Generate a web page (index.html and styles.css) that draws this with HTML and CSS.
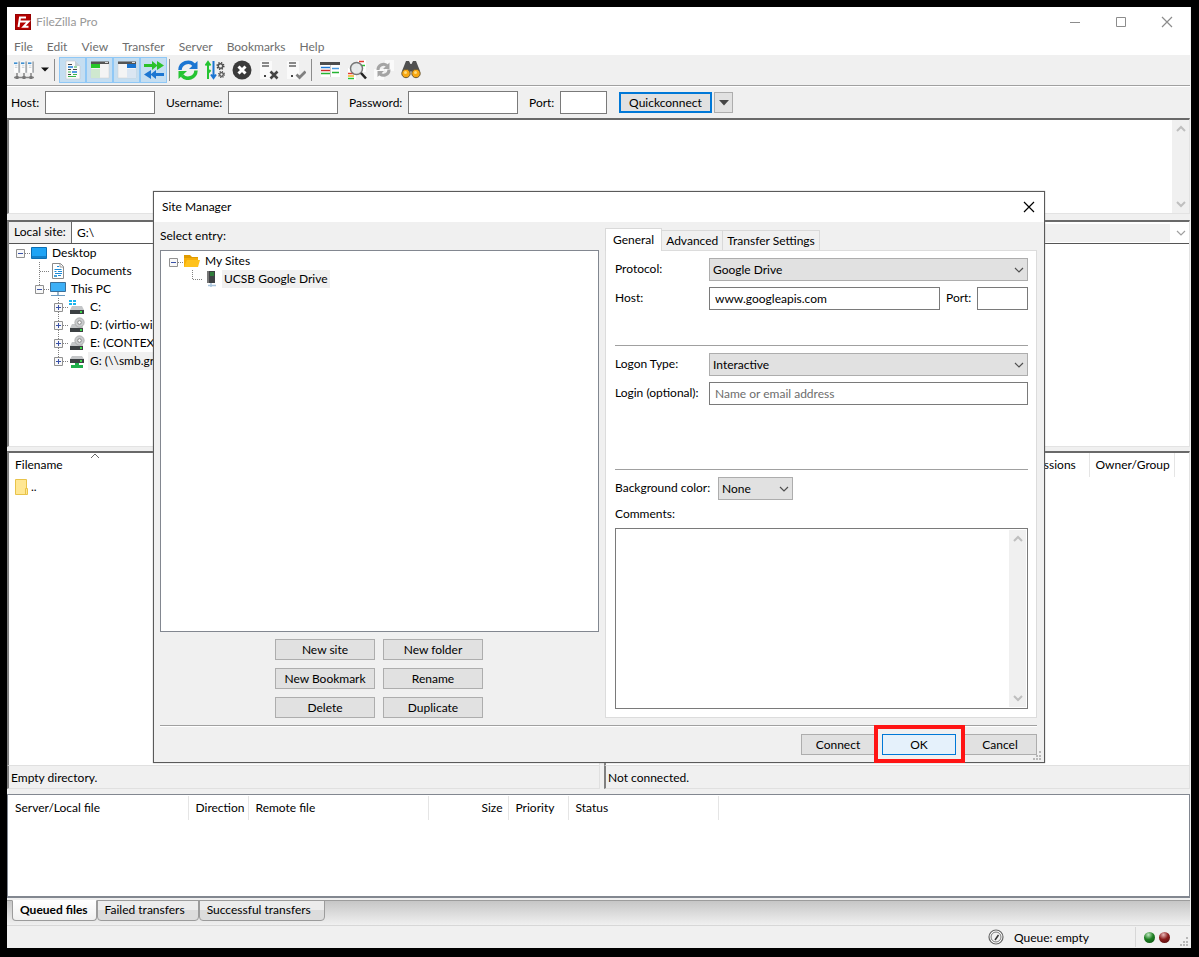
FILE: index.html
```html
<!DOCTYPE html>
<html lang="en">
<head>
<meta charset="utf-8">
<title>FileZilla Pro</title>
<link rel="stylesheet" href="styles.css">
</head>
<body>
<svg class="defs" aria-hidden="true">
  <symbol id="chev-up" viewBox="0 0 10 8"><path d="M1 6 5 2l4 4" fill="none" stroke="currentColor" stroke-width="2"/></symbol>
  <symbol id="chev-down" viewBox="0 0 10 8"><path d="M1 2l4 4 4-4" fill="none" stroke="currentColor" stroke-width="2"/></symbol>
  <symbol id="combo-arrow" viewBox="0 0 10 8"><path d="M1 2l4 4 4-4" fill="none" stroke="currentColor" stroke-width="1.2"/></symbol>
  <symbol id="close" viewBox="0 0 12 12"><path d="M1 1l10 10M11 1 1 11" stroke="currentColor" stroke-width="1.2"/></symbol>
  <symbol id="grip" viewBox="0 0 10 10"><path d="M7 0h2v2h-2zM7 4h2v2h-2zM7 7h2v2h-2zM4 4h2v2h-2zM4 7h2v2h-2zM1 7h2v2h-2z" fill="#b8b8b8"/></symbol>
  <symbol id="drive" viewBox="0 0 16 16"><path d="M3 7h10l2 4H1z" fill="#c4c6c8"/><path d="M1 11h14v4H1z" fill="#3c4043"/><path d="M11 12h2v2h-2z" fill="#3ddc4a"/></symbol>
  <symbol id="disc-drive" viewBox="0 0 16 16"><path d="M3 7h10l1 4H1z" fill="#c4c6c8"/><path d="M1 11h13v4H1z" fill="#3c4043"/><circle cx="10.500" cy="5.500" r="4.700" fill="#c9cbcd" stroke="#999" stroke-width=".6"/><circle cx="10.500" cy="5.500" r="1.800" fill="#fff" stroke="#888"/><path d="M11 12h2v2h-2z" fill="#3ddc4a"/></symbol>
  <symbol id="box-plus" viewBox="0 0 9 9"><path d="M.5.5h8v8h-8z" fill="#f8f8f8" stroke="#919191"/><path d="M2 4.500h5M4.500 2v5" stroke="#3a52a8"/></symbol>
  <symbol id="box-minus" viewBox="0 0 9 9"><path d="M.5.5h8v8h-8z" fill="#f8f8f8" stroke="#919191"/><path d="M2 4.500h5" stroke="#3a52a8"/></symbol>
  <symbol id="tower" viewBox="0 0 7 14"><path d="M0 0h5v13H0z" fill="#fdfdfd"/><path d="M5 0h2v13H5z" fill="#a9adb0"/><path d="M0 1h4v2H0z" fill="#3f8fd0"/><path d="M1 5h3M1 7h3" stroke="#c9ced2"/></symbol>
</svg>

<div class="window">
  <header class="titlebar">
    <svg class="logo" viewBox="0 0 16 16"><path d="M0 0h16v16H0z" fill="#b40000"/><path d="M.5.5h15v15H.5z" fill="none" stroke="#7d0000" stroke-dasharray="1 1"/><path d="M3.500 13 5 3.500h6M4 7.500h5M8 7.500h5.500L8.500 12.800h5" fill="none" stroke="#fff" stroke-width="2"/></svg>
    <h1 class="title">FileZilla Pro</h1>
    <button class="winbtn" aria-label="Minimize"><svg width="12" height="12" viewBox="0 0 12 12"><path d="M1 6.500h10" stroke="#8c8c8c"/></svg></button>
    <button class="winbtn" aria-label="Maximize"><svg width="12" height="12" viewBox="0 0 12 12"><path d="M1.500 1.500h9v9h-9z" fill="none" stroke="#8c8c8c"/></svg></button>
    <button class="winbtn" aria-label="Close"><svg width="12" height="12"><use href="#close"/></svg></button>
  </header>
  <nav class="menubar">
    <button>File</button><button>Edit</button><button>View</button><button>Transfer</button><button>Server</button><button>Bookmarks</button><button>Help</button>
  </nav>

  <div class="toolbar">
    <button class="tool" aria-label="Open the Site Manager"><svg viewBox="0 0 20 20"><use href="#tower" x="0" y="1" width="6" height="13"/><use href="#tower" x="7" y="1" width="6" height="13"/><use href="#tower" x="14" y="1" width="6" height="13"/><path d="M3 13v4M10 13v4M17 13v4M0 17.500h20" stroke="#858585" stroke-width="1.500"/><path d="M1.500 16h3v3h-3zM8.500 16h3v3h-3zM15.500 16h3v3h-3z" fill="#777"/></svg></button>
    <button class="tool drop" aria-label="Site list"><svg viewBox="0 0 8 5"><path d="M0 .5h8L4 4.500z" fill="#111"/></svg></button>
    <span class="sep"></span>
    <button class="tool on" aria-label="Toggle message log"><svg viewBox="0 0 20 20"><path d="M3 1h9l5 5v13H3z" fill="#fafafa" stroke="#c8ccd0" stroke-width=".7"/><path d="M12 1v5h5z" fill="#c4d0d8"/><path d="M5 4.500h4M5 9.500h3M10 9.500h4M5 14.500h3" stroke="#444"/><path d="M5 7h5M9 12h5" stroke="#1c7cd6" stroke-width="1.500"/><path d="M11 7h3M5 12h3M10 14.500h4M5 16.500h8" stroke="#39b54a"/></svg></button>
    <button class="tool on" aria-label="Toggle local tree"><svg viewBox="0 0 20 20"><path d="M1 2h18v16H1z" fill="#f4f4f4" stroke="#ccc" stroke-width=".5"/><path d="M1 1.500h18v2.500H1z" fill="#555"/><path d="M15 2.500h3" stroke="#ddd"/><path d="M1 4h9v4H1z" fill="#28c728"/><path d="M1 9h9v9H1z" fill="#cfe8cf"/></svg></button>
    <button class="tool on" aria-label="Toggle remote tree"><svg viewBox="0 0 20 20"><path d="M1 2h18v16H1z" fill="#f4f4f4" stroke="#ccc" stroke-width=".5"/><path d="M1 1.500h18v2.500H1z" fill="#555"/><path d="M15 2.500h3" stroke="#ddd"/><path d="M10 4h9v4h-9z" fill="#1873cf"/><path d="M10 9h9v9h-9z" fill="#dbe6f2"/></svg></button>
    <button class="tool on" aria-label="Toggle transfer queue"><svg viewBox="0 0 20 20"><path d="M0 4h8V1l5 4V1l7 4.500L13 10V6l-5 4V7H0z" fill="#2ac22a"/><path d="M20 13h-8v-3l-5 4v-4l-7 4.500L7 19v-4l5 4v-3h8z" fill="#1c76d2"/></svg></button>
    <span class="sep"></span>
    <button class="tool" aria-label="Refresh"><svg viewBox="0 0 20 20"><path d="M2 10a8 8 0 0 1 14-5" fill="none" stroke="#1c76d2" stroke-width="3.500"/><path d="M19.500 1v8H11z" fill="#1c76d2"/><path d="M18 10.500a8 8 0 0 1-14 5" fill="none" stroke="#25c432" stroke-width="3.500"/><path d="M.5 19v-8H9z" fill="#25c432"/></svg></button>
    <button class="tool" aria-label="Process queue"><svg viewBox="0 0 20 20"><path d="M3 19V3M.5 5.500 3 2l2.500 3.500M3 13l2.500-3" fill="none" stroke="#25c432" stroke-width="2"/><path d="M8.500 1v17M6 14.500 8.500 18l2.500-3.500" fill="none" stroke="#1c76d2" stroke-width="2"/><circle cx="15.500" cy="6" r="3.300" fill="none" stroke="#444" stroke-width="1.500" stroke-dasharray="1.300 1.300"/><circle cx="15.500" cy="6" r="2.200" fill="none" stroke="#555" stroke-width="1.400"/><circle cx="16.500" cy="14.500" r="2.800" fill="none" stroke="#444" stroke-width="1.400" stroke-dasharray="1.100 1.100"/><circle cx="16.500" cy="14.500" r="1.800" fill="none" stroke="#555" stroke-width="1.300"/></svg></button>
    <button class="tool" aria-label="Cancel operation"><svg viewBox="0 0 20 20"><circle cx="10" cy="10" r="9.500" fill="#3b3b3b"/><path d="M6.500 6.500l7 7M13.500 6.500l-7 7" stroke="#fff" stroke-width="3"/></svg></button>
    <button class="tool" aria-label="Disconnect"><svg viewBox="0 0 20 20"><path d="M1 1h12v18H1z" fill="#fafafa"/><path d="M3 3h7M3 6h7" stroke="#666" stroke-width="1.300"/><path d="M5 15h2v2H5z" fill="#444"/><path d="M11.500 11.500l7 7M18.500 11.500l-7 7" stroke="#444" stroke-width="2.600"/></svg></button>
    <button class="tool" aria-label="Reconnect"><svg viewBox="0 0 20 20"><path d="M1 1h12v18H1z" fill="#fafafa"/><path d="M3 3h7M3 6h7" stroke="#666" stroke-width="1.300"/><path d="M5 15h2v2H5z" fill="#444"/><path d="M10.500 14.500l3 3 6-6" fill="none" stroke="#808080" stroke-width="2.700"/></svg></button>
    <span class="sep"></span>
    <button class="tool" aria-label="Directory listing filters"><svg viewBox="0 0 20 20"><path d="M1 3h19v14H1z" fill="#fff"/><path d="M0 2h20v3H0z" fill="#4d4d4d"/><path d="M10 5h1v12h-1z" fill="#ccc"/><path d="M1 7.500h9" stroke="#1c76d2" stroke-width="1.500"/><path d="M12 8.500h7" stroke="#4b9be0" stroke-width="1.500"/><path d="M1 10.500h9" stroke="#c92a2a" stroke-width="1.500"/><path d="M1 13.500h9M12 12.500h7" stroke="#25b432" stroke-width="1.500"/></svg></button>
    <button class="tool" aria-label="Directory comparison"><svg viewBox="0 0 20 20"><path d="M11 0h8v12h-8zM1 8h8v12H1z" fill="#fff"/><path d="M12 1.500h5M1 13.500h6" stroke="#e03a2e" stroke-width="1.600"/><path d="M13 5.500h5M1 18.500h6" stroke="#25c432" stroke-width="1.600"/><path d="M1 16h6" stroke="#f0b429" stroke-width="1.600"/><circle cx="9.500" cy="8.500" r="6" fill="#e4e6e8" fill-opacity=".85" stroke="#777" stroke-width="1.500"/><path d="M14 13l5 5.500" stroke="#222" stroke-width="2.600"/></svg></button>
    <button class="tool" aria-label="Synchronized browsing"><svg viewBox="0 0 20 20"><path d="M11 0h9v11h-9zM0 9h10v11H0z" fill="#fafafa"/><path d="M4 10a5.500 5.500 0 0 1 9-4.500M15 9.500a5.500 5.500 0 0 1-9 4.500" fill="none" stroke="#a4a4a4" stroke-width="3"/><path d="M15.500 2.500v6.500H9zM3.500 17v-6H10z" fill="#a4a4a4"/></svg></button>
    <button class="tool" aria-label="Search remote files"><svg viewBox="0 0 20 20"><path d="M5 1h3l1.500 3h1L12 1h3l4 10-6 4-3-4-3 4-6-4z" fill="#505050"/><circle cx="5" cy="13.500" r="4.200" fill="#f8a813" stroke="#6b5a3a"/><circle cx="15" cy="13.500" r="4.200" fill="#f8a813" stroke="#6b5a3a"/><circle cx="4.500" cy="12.500" r="1.500" fill="#ffdc7a"/><circle cx="14.500" cy="12.500" r="1.500" fill="#ffdc7a"/></svg></button>
  </div>

  <form class="quickbar">
    <label class="q-host" for="qhost">Host:</label><input class="q-in" id="qhost">
    <label class="q-user" for="quser">Username:</label><input class="q-in" id="quser">
    <label class="q-pass" for="qpass">Password:</label><input class="q-in" id="qpass" type="password">
    <label class="q-port" for="qport">Port:</label><input class="q-in short" id="qport">
    <button class="btn default" type="button">Quickconnect</button>
    <button class="btn arrow" type="button" aria-label="Recent connections"><svg width="10" height="6" viewBox="0 0 10 6"><path d="M0 0h10L5 5.500z" fill="#444"/></svg></button>
  </form>

  <section class="log sunken" aria-label="Message log">
    <div class="scrollbar"><svg width="10" height="8"><use href="#chev-up"/></svg><svg width="10" height="8"><use href="#chev-down"/></svg></div>
  </section>

  <main class="panes">
    <section class="pane local">
      <div class="treepane sunken">
        <div class="sitebar"><label for="lsite">Local site:</label><input id="lsite" value="G:\"></div>
        <ul class="tree">
          <li><svg width="22" height="18"><path class="dots" d="M16 9.500h6"/><use href="#box-minus" x="7" y="5" width="9" height="9"/></svg><svg width="16" height="16" viewBox="0 0 16 16"><path d="M.5 2.500h15v11H.5z" fill="#1fa4f5" stroke="#0c6fb5"/><path d="M1 12h14" stroke="#0a5c9c"/></svg><span>Desktop</span></li>
          <li><svg width="41" height="18"><path class="dots" d="M30.500 0v18M31 9.500h10"/></svg><svg width="16" height="16" viewBox="0 0 16 16"><path d="M2.500.5h8l3 3v12h-11z" fill="#fff" stroke="#8a8a8a"/><path d="M10 1v3h3" fill="none" stroke="#999"/><path d="M7 3.500h2M4.500 6.500h7M4.500 8.500h2M8 8.500h4M5 10.500h7M8 12.500h3" stroke="#1c8ad6"/><path d="M4 12h3v2H4z" fill="#47a3d8"/></svg><span>Documents</span></li>
          <li><svg width="41" height="18"><path class="dots" d="M30.500 0v5M35 9.500h6"/><use href="#box-minus" x="26" y="5" width="9" height="9"/></svg><svg width="16" height="16" viewBox="0 0 16 16"><path d="M.5 1.500h15v9H.5z" fill="#3db0f7" stroke="#3b6f98"/><path d="M7 11h2v3H7z" fill="#9fb6c8"/><path d="M1 14.500h14" stroke="#6b9ac0"/></svg><span>This PC</span></li>
          <li><svg width="60" height="18"><path class="dots" d="M49.500 0v18M54 9.500h6"/><use href="#box-plus" x="45" y="5" width="9" height="9"/></svg><svg width="16" height="16" viewBox="0 0 16 16"><use href="#drive"/><path d="M0 1h3v2H0zM4 1h3v2H4zM0 4h3v2H0zM4 4h3v2H4z" fill="#19b5ee"/></svg><span>C:</span></li>
          <li><svg width="60" height="18"><path class="dots" d="M49.500 0v18M54 9.500h6"/><use href="#box-plus" x="45" y="5" width="9" height="9"/></svg><svg width="16" height="16"><use href="#disc-drive"/></svg><span>D: (virtio-win)</span></li>
          <li><svg width="60" height="18"><path class="dots" d="M49.500 0v18M54 9.500h6"/><use href="#box-plus" x="45" y="5" width="9" height="9"/></svg><svg width="16" height="16"><use href="#disc-drive"/></svg><span>E: (CONTEXT)</span></li>
          <li><svg width="60" height="18"><path class="dots" d="M49.500 0v5M54 9.500h6"/><use href="#box-plus" x="45" y="5" width="9" height="9"/></svg><svg width="16" height="16" viewBox="0 0 16 16"><path d="M3 3h10l2 3H1z" fill="#c4c6c8"/><path d="M1 6h14v4H1z" fill="#3c4043"/><path d="M11 7h2v2h-2z" fill="#3ddc4a"/><path d="M6 10h4v2h4v3H2v-3h4z" fill="#1faf4b"/></svg><span class="picked">G: (\\smb.grit</span></li>
        </ul>
      </div>
      <div class="filepane sunken">
        <table class="files">
          <colgroup><col class="c-name"><col></colgroup>
          <thead><tr><th>Filename<svg class="sort" width="10" height="6" viewBox="0 0 10 6"><path d="M1 5l4-4 4 4" fill="none" stroke="#666"/></svg></th><th></th></tr></thead>
          <tbody><tr><td><div class="file"><svg width="14" height="16" viewBox="0 0 14 16"><path d="M.5.5h11v15H.5z" fill="#ffe793" stroke="#e8c34a"/><path d="M10.500 9.500h2v6h-2z" fill="#ffe793" stroke="#e8c34a"/></svg>..</div></td><td></td></tr></tbody>
        </table>
      </div>
      <div class="panestatus">Empty directory.</div>
    </section>
    <section class="pane remote">
      <div class="treepane sunken">
        <div class="sitebar off"><input aria-label="Remote site" disabled><svg width="10" height="8"><use href="#combo-arrow"/></svg></div>
      </div>
      <div class="filepane sunken">
        <table class="files">
          <colgroup><col><col class="c-perm"><col class="c-own"><col class="c-rest"></colgroup>
          <thead><tr><th></th><th>Permissions</th><th>Owner/Group</th><th></th></tr></thead>
        </table>
      </div>
      <div class="panestatus">Not connected.</div>
    </section>
  </main>

  <section class="queue">
    <table class="files">
      <colgroup><col class="k1"><col class="k2"><col class="k3"><col class="k4"><col class="k5"><col class="k6"><col></colgroup>
      <thead><tr><th>Server/Local file</th><th>Direction</th><th>Remote file</th><th class="num">Size</th><th>Priority</th><th>Status</th><th></th></tr></thead>
    </table>
  </section>
  <div class="queuetabs">
    <button class="qtab active">Queued files</button><button class="qtab">Failed transfers</button><button class="qtab">Successful transfers</button>
  </div>
  <footer class="statusbar">
    <svg width="16" height="16" viewBox="0 0 16 16"><circle cx="8" cy="8" r="7" fill="#fff" stroke="#666" stroke-width="1.200"/><circle cx="8" cy="8" r="5" fill="#f2f2f2" stroke="#777"/><path d="M7 11l3.500-5" stroke="#333" stroke-width="1.500"/></svg>
    <span class="queuestate">Queue: empty</span>
    <span class="leds"><i class="led green"></i><i class="led red"></i></span>
    <svg class="corner" width="10" height="10"><use href="#grip"/></svg>
  </footer>
</div>

<div class="dialog" role="dialog" aria-labelledby="dlg-title">
  <header class="dlg-title">
    <h2 id="dlg-title">Site Manager</h2>
    <button class="dlg-close" aria-label="Close"><svg width="12" height="12"><use href="#close"/></svg></button>
  </header>
  <div class="dlg-main">
    <section class="entries">
      <h3 class="entries-label">Select entry:</h3>
      <ul class="tree sites">
        <li><svg width="22" height="18"><path class="dots" d="M16 10.500h6"/><use href="#box-minus" x="7" y="6" width="9" height="9"/></svg><svg width="16" height="16" viewBox="0 0 16 16"><path d="M0 2h6l2 2h6v3H0z" fill="#e09b00"/><path d="M0 5h14v9H0z" fill="#f5ae0a"/><path d="M3 7h13l-2 7H0z" fill="#ffc21c"/></svg><span>My Sites</span></li>
        <li><svg width="41" height="18"><path class="dots" d="M30.500 0v9M31 9.500h10"/></svg><svg width="16" height="16" viewBox="0 0 16 16"><path d="M4 0h8v12H4z" fill="#3f4245"/><path d="M4 0h2v12H4z" fill="#777"/><path d="M7 2h4M7 4h4" stroke="#22b832"/><path d="M8 12v4M5 14.500h8" stroke="#a8c4dc" stroke-width="1.500"/></svg><span class="picked">UCSB Google Drive</span></li>
      </ul>
      <div class="entry-btns">
        <button class="btn">New site</button><button class="btn">New folder</button>
        <button class="btn">New Bookmark</button><button class="btn">Rename</button>
        <button class="btn">Delete</button><button class="btn">Duplicate</button>
      </div>
    </section>
    <section class="settings">
      <div class="tabs" role="tablist">
        <button class="tab active" role="tab" aria-selected="true">General</button><button class="tab" role="tab">Advanced</button><button class="tab" role="tab">Transfer Settings</button>
      </div>
      <form class="tabpage">
        <div class="row"><label for="proto">Protocol:</label><span class="combo"><select id="proto"><option>Google Drive</option></select><svg width="10" height="8"><use href="#combo-arrow"/></svg></span></div>
        <div class="row"><label for="host">Host:</label><input id="host" value="www.googleapis.com"><label class="portlabel" for="port">Port:</label><input class="port" id="port"></div>
        <hr class="rule first">
        <div class="row"><label for="logon">Logon Type:</label><span class="combo"><select id="logon"><option>Interactive</option></select><svg width="10" height="8"><use href="#combo-arrow"/></svg></span></div>
        <div class="row"><label for="login">Login (optional):</label><input id="login" placeholder="Name or email address"></div>
        <hr class="rule second">
        <div class="row color"><label for="bg">Background color:</label><span class="combo"><select id="bg"><option>None</option></select><svg width="10" height="8"><use href="#combo-arrow"/></svg></span></div>
        <label class="comments-label" for="comments">Comments:</label>
        <div class="comments"><textarea id="comments"></textarea><div class="scrollbar"><svg width="10" height="8"><use href="#chev-up"/></svg><svg width="10" height="8"><use href="#chev-down"/></svg></div></div>
      </form>
    </section>
  </div>
  <footer class="dlg-foot">
    <button class="btn">Connect</button>
    <span class="marked"><button class="btn hot">OK</button></span>
    <button class="btn">Cancel</button>
    <svg class="corner" width="10" height="10"><use href="#grip"/></svg>
  </footer>
</div>
</body>
</html>
```
FILE: styles.css
```css
* { box-sizing: border-box; }

body {
  margin: 0;
  min-height: 100vh;
  padding: 7px 8px 9px 7px;
  background: #000;
  color: #000;
  font: 12px/18px Lato, "Open Sans", sans-serif;
  display: flex;
  position: relative;
}

button, input, select, textarea { font: inherit; color: inherit; margin: 0; border-radius: 0; }
button { padding: 0; border: 0; background: none; white-space: nowrap; }
input, textarea { border: 1px solid #7a7a7a; background: #fff; min-width: 0; outline: 0; }
svg { display: block; flex: none; }
h1, h2, h3 { margin: 0; font: inherit; }
ul { margin: 0; padding: 0; list-style: none; }
.defs { position: absolute; width: 0; height: 0; }

.window {
  flex: 1;
  min-width: 0;
  padding-right: 1px;
  background: #f0f0f0;
  display: flex;
  flex-direction: column;
}

/* title and menus */
.titlebar { display: flex; align-items: center; height: 30px; padding-left: 8px; background: #fff; }
.logo { width: 16px; height: 16px; }
.title { flex: 1; margin-left: 5px; color: #999; }
.winbtn { width: 46px; height: 30px; display: grid; place-items: center; color: #8c8c8c; }
.menubar { display: flex; gap: 14px; height: 18px; padding-left: 7px; background: #fff; color: #6d6d6d; }
.menubar button { line-height: 20px; }

/* toolbar */
.toolbar { display: flex; align-items: center; height: 32px; padding: 0 0 2px 3px; border-bottom: 1px solid #fff; box-shadow: inset 0 -1px #a0a0a0; }
.tool { width: 27px; height: 26px; display: grid; place-items: center; }
.tool svg { width: 20px; height: 20px; }
.tool.drop { width: 15px; }
.tool.drop svg { width: 8px; height: 5px; }
.tool.on { background: #c5def1; border: 1px solid #90c8f6; }
.sep { width: 1px; height: 22px; margin: 0 4px 0 2px; background: #8c8c8c; }

/* quick connect */
.quickbar { display: flex; align-items: center; height: 31px; padding-left: 4px; }
.q-in { width: 110px; height: 23px; margin-right: 11px; }
.q-in.short { width: 47px; margin-right: 12px; }
.q-host { width: 34px; }
.q-user { width: 62px; }
.q-pass { width: 59px; }
.q-port { width: 31px; }
.btn { height: 21px; line-height: 19px; border: 1px solid #adadad; background: #e1e1e1; text-align: center; }
.btn.default { width: 93px; border: 2px solid #0078d7; line-height: 17px; margin-right: 2px; }
.btn.arrow { width: 19px; display: grid; place-items: center; }

.sunken { background: #fff; border-top: 2px solid #696969; border-left: 2px solid #808080; border-right: 1px solid #e3e3e3; border-bottom: 1px solid #e3e3e3; }

.log { flex: 0 1 96px; display: flex; justify-content: flex-end; }
.scrollbar { width: 17px; padding: 5px 0; background: #f0f0f0; color: #bfbfbf; display: flex; flex-direction: column; justify-content: space-between; align-items: center; }

/* panes */
.panes { flex: 1; display: flex; gap: 4px; padding-top: 6px; min-height: 0; }
.pane { min-width: 0; display: flex; flex-direction: column; }
.local { flex: 593 1 0; }
.remote { flex: 586 1 0; }
.treepane { flex: 226 1 0; overflow: hidden; margin-bottom: 4px; }
.filepane { flex: 314 1 0; overflow: hidden; border-bottom: 0; }
.sitebar { display: flex; height: 22px; border-bottom: 1px solid #555; }
.sitebar label { width: 63px; padding-left: 5px; padding-top: 1px; background: #f0f0f0; border-right: 1px solid #696969; }
.sitebar input { flex: 1; border: 0; padding: 0 5px; }
.sitebar.off { align-items: center; padding-right: 3px; color: #a0a0a0; }
.sitebar.off input { height: 18px; margin-right: 6px; background: #f0f0f0; }

.tree li { display: flex; align-items: center; height: 18px; }
.tree span { margin-left: 3px; padding: 0 2px; white-space: nowrap; }
.picked { background: #f0f0f0; }
.dots { fill: none; stroke: #808080; stroke-dasharray: 1 1; }

.files { width: 100%; border-collapse: collapse; table-layout: fixed; }
.files th { position: relative; height: 24px; padding: 0 6px; border-right: 1px solid #e5e5e5; font-weight: normal; text-align: left; white-space: nowrap; }
.files th:last-child { border-right: 0; }
.files .num { text-align: right; }
.files td { padding: 0 6px; }
.file { display: flex; gap: 2px; height: 20px; align-items: center; }
.sort { position: absolute; top: 0; left: 50%; margin-left: -6px; }
.c-name { width: 174px; }
.c-perm { width: 82px; }
.c-own { width: 85px; }
.c-rest { width: 15px; }
.k1 { width: 180px; }
.k2 { width: 60px; }
.k3 { width: 180px; }
.k4 { width: 80px; }
.k5 { width: 60px; }
.k6 { width: 150px; }

.panestatus { height: 24px; padding: 3px 2px 0; line-height: 18px; border: solid #e0e0e0; border-width: 1px 1px 1px 2px; border-left-color: #808080; }

/* queue */
.queue { flex: 0 1 104px; margin-top: 5px; padding-top: 1px; background: #fff; border: 1px solid #828790; border-bottom-width: 2px; }
.queue th { padding: 0 5px 0 7px; }
.queuetabs { display: flex; height: 27px; padding: 2px 0 0 5px; background: linear-gradient(#f0f0f0 2px, #9c9c9c 2px, #9c9c9c 3px, #c6c6c6 3px, #f0f0f0); }
.qtab { height: 21px; padding: 0 13px 2px 7px; border: 1px solid #9c9c9c; border-radius: 0 0 4px 4px; background: linear-gradient(#ececec 50%, #dcdcdc 50%); }
.qtab.active { padding: 0 8px 2px 7px; font-weight: bold; background: linear-gradient(#fff, #f0f0f0); border-top-color: #fff; }
.statusbar { position: relative; display: flex; align-items: center; height: 23px; border-top: 1px solid #d7d7d7; justify-content: flex-end; padding-right: 10px; }
.queuestate { margin-left: 10px; width: 121px; padding-top: 2px; }
.leds { display: flex; gap: 4px; align-items: center; padding: 0 10px 0 8px; height: 20px; border-left: 1px solid #d7d7d7; }
.led { width: 11px; height: 11px; border-radius: 50%; }
.led.green { background: radial-gradient(circle at 40% 25%, #c0e8c0, #1d7f22 45%, #0b4a10); }
.led.red { background: radial-gradient(circle at 40% 25%, #e8b8b8, #8a1c1c 45%, #4a0b0b); }
.corner { position: absolute; right: 1px; bottom: 1px; }

/* site manager dialog, floating over the main window */
.dialog { position: absolute; inset: 191px 154px 194px 153px; display: flex; flex-direction: column; background: #f0f0f0; border: 1px solid #5a5a5a; box-shadow: 0 0 1px #888; }
.dlg-title { display: flex; justify-content: space-between; height: 30px; padding-left: 8px; background: #fff; line-height: 30px; }
.dlg-close { width: 30px; height: 29px; display: grid; place-items: center; }
.dlg-main { flex: 1; display: flex; gap: 6px; padding: 6px 7px 7px 6px; min-height: 0; }
.entries { flex: 439 1 0; min-width: 0; display: flex; flex-direction: column; }
.entries-label { height: 22px; line-height: 16px; }
.sites { flex: 1; padding: 1px 0 0 1px; border: 1px solid #828790; background: #fff; }
.entry-btns { display: grid; grid-template-columns: 100px 100px; gap: 8px; justify-content: center; padding: 7px 1px 0 0; }
.settings { flex: 432 1 0; min-width: 0; display: flex; flex-direction: column; }
.tabs { display: flex; align-items: flex-end; height: 22px; }
.tab { height: 20px; padding: 0 4px; border: 1px solid #d9d9d9; border-width: 1px 1px 0 0; line-height: 19px; }
.tab.active { height: 23px; padding: 0 7px 2px; margin-bottom: -1px; border-width: 1px 1px 0; background: #fff; z-index: 1; }
.tabpage { flex: 1; display: flex; flex-direction: column; padding: 7px 8px 8px 9px; border: 1px solid #dcdcdc; background: #fff; min-height: 0; }
.row { display: flex; height: 23px; margin-bottom: 6px; }
.row label { width: 94px; line-height: 22px; white-space: nowrap; }
.row > input { flex: 1; padding: 0 5px; }
.row > .portlabel { width: 37px; padding-left: 6px; }
.row > .port { flex: none; width: 51px; }
.row.color label { width: 103px; }
.row.color .combo { flex: none; width: 75px; }
.combo { flex: 1; display: grid; align-items: center; justify-items: end; color: #505050; }
.combo > * { grid-area: 1 / 1; }
.combo svg { margin-right: 4px; pointer-events: none; }
.combo select { width: 100%; height: 23px; padding: 0 3px; appearance: none; border: 1px solid #adadad; background: #e1e1e1; color: #000; }
.row input::placeholder { color: #6d6d6d; opacity: 1; }
.rule { width: 100%; height: 1px; margin: 29px 0 7px; border: 0; background: #a0a0a0; flex: none; }
.rule.second { margin-top: 58px; }
.comments-label { height: 22px; line-height: 16px; }
.comments { flex: 1; display: flex; padding: 1px; border: 1px solid #7a7a7a; min-height: 0; }
.comments textarea { flex: 1; border: 0; resize: none; }
.dlg-foot { position: relative; display: flex; align-items: flex-start; justify-content: flex-end; gap: 7px; height: 37px; margin: 0 7px 0 6px; padding-top: 9px; box-shadow: inset 0 1px #a0a0a0, inset 0 2px #fff; }
.dlg-foot .btn { width: 74px; }
.dlg-foot .corner { right: -5px; }
.marked { position: relative; z-index: 1; }
.marked::after { content: ""; position: absolute; inset: -9px -9px -8px -8px; border: 4px solid #ff1414; pointer-events: none; }
.btn.hot { display: block; border-color: #0078d7; background: #e5f1fb; }
```
